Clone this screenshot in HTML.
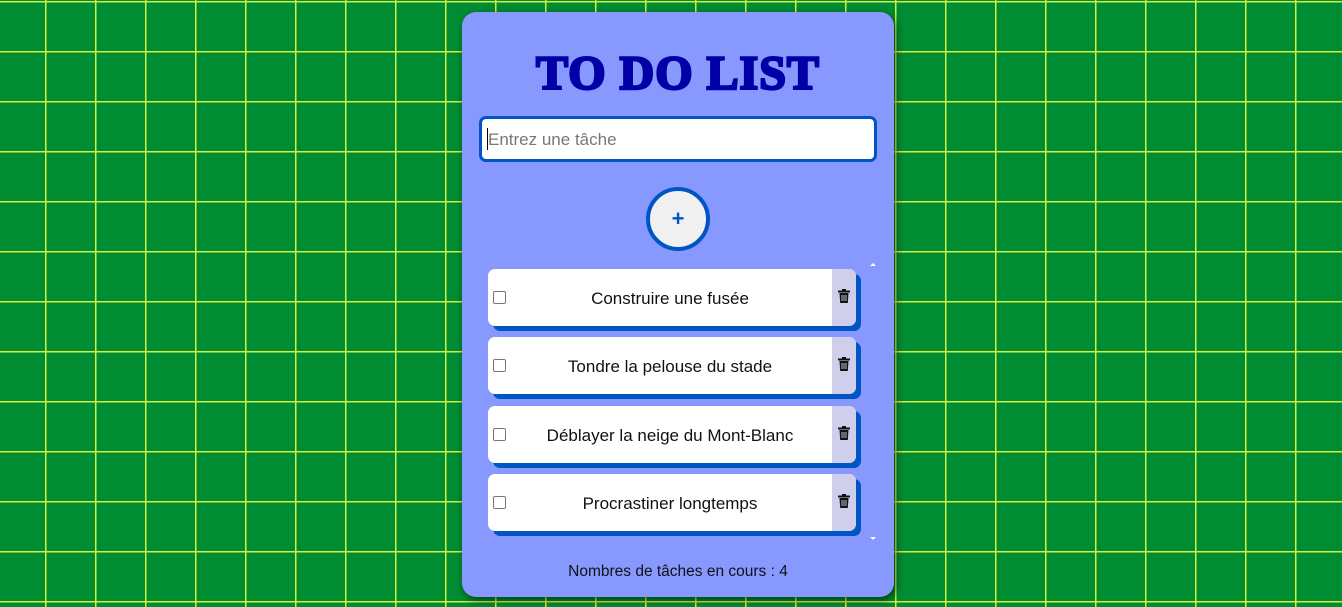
<!DOCTYPE html>
<html><head><meta charset="utf-8"><style>
html,body{margin:0;padding:0;width:1342px;height:607px;overflow:hidden}
body{background-color:#008c33;background-image:linear-gradient(90deg,#d6ee3c 0,#d6ee3c 1.6px,transparent 1.6px),linear-gradient(180deg,#d6ee3c 0,#d6ee3c 1.6px,transparent 1.6px);background-size:50px 50px;background-position:45px 0,0 1px;font-family:"Liberation Sans",sans-serif;position:relative}
.card{position:absolute;left:462px;top:12px;width:432px;height:585px;background:#8798ff;border-radius:14px;box-shadow:2px 3px 8px rgba(0,0,0,.55)}
h1{position:absolute;left:0;width:432px;top:38px;margin:0;text-align:center;font-family:"Liberation Serif",serif;font-weight:900;font-size:48px;color:#0000a6;letter-spacing:1px;-webkit-text-stroke:2.5px #0000a6;line-height:48px}
.inp{position:absolute;left:17px;top:104px;width:392px;height:40px;background:#fff;border:3px solid #0055c4;border-radius:7px}
.inp span{position:absolute;left:6px;top:11px;font-size:17px;color:#777}
.inp i{position:absolute;left:5px;top:9px;width:1px;height:22px;background:#000}
.btn{position:absolute;left:184px;top:175px;width:56px;height:56px;border:4px solid #0055c4;border-radius:50%;background:#f0f0f0;text-align:center;line-height:56px;font-size:22px;font-weight:bold;color:#0055c4}
.item{position:absolute;left:26px;width:368px;height:57px;background:#fff;border-radius:7px;box-shadow:5px 5px 0 #0055c4;overflow:hidden}
.item .cb{position:absolute;left:5px;top:22px;width:11px;height:11px;border:1px solid #777;border-radius:2px;background:#fff}
.item .t{position:absolute;left:20px;width:324px;top:1px;line-height:58px;text-align:center;font-size:17px;color:#111}
.item .d{position:absolute;right:0;top:0;width:24px;height:57px;background:#cfcfeb}
.item .d svg{position:absolute;left:6px;top:20px}
.foot{position:absolute;left:0;width:432px;top:551px;text-align:center;font-size:15.5px;color:#111}
.arr{position:absolute;left:408px;width:0;height:0;border-left:3px solid transparent;border-right:3px solid transparent}
</style></head><body>
<div class="card">
<h1>TO DO LIST</h1>
<div class="inp"><i></i><span>Entrez une tâche</span></div>
<div class="btn">+</div>
<div class="arr" style="top:251px;border-bottom:3px solid #fff"></div>
<div class="arr" style="top:525px;border-top:3px solid #fff"></div>
<div class="item" style="top:257px"><div class="cb"></div><div class="t">Construire une fusée</div><div class="d"><svg width="12" height="14" viewBox="0 0 12 14"><rect x="0" y="1.5" width="12" height="2" fill="#111"/><rect x="4" y="0" width="4" height="2" fill="#111"/><path d="M1.5 4h9l-.7 10h-7.6z" fill="#111"/><path d="M4 6v6M6 6v6M8 6v6" stroke="#cfcfeb" stroke-width="0.9"/></svg></div></div>
<div class="item" style="top:325px"><div class="cb"></div><div class="t">Tondre la pelouse du stade</div><div class="d"><svg width="12" height="14" viewBox="0 0 12 14"><rect x="0" y="1.5" width="12" height="2" fill="#111"/><rect x="4" y="0" width="4" height="2" fill="#111"/><path d="M1.5 4h9l-.7 10h-7.6z" fill="#111"/><path d="M4 6v6M6 6v6M8 6v6" stroke="#cfcfeb" stroke-width="0.9"/></svg></div></div>
<div class="item" style="top:394px"><div class="cb"></div><div class="t">Déblayer la neige du Mont-Blanc</div><div class="d"><svg width="12" height="14" viewBox="0 0 12 14"><rect x="0" y="1.5" width="12" height="2" fill="#111"/><rect x="4" y="0" width="4" height="2" fill="#111"/><path d="M1.5 4h9l-.7 10h-7.6z" fill="#111"/><path d="M4 6v6M6 6v6M8 6v6" stroke="#cfcfeb" stroke-width="0.9"/></svg></div></div>
<div class="item" style="top:462px"><div class="cb"></div><div class="t">Procrastiner longtemps</div><div class="d"><svg width="12" height="14" viewBox="0 0 12 14"><rect x="0" y="1.5" width="12" height="2" fill="#111"/><rect x="4" y="0" width="4" height="2" fill="#111"/><path d="M1.5 4h9l-.7 10h-7.6z" fill="#111"/><path d="M4 6v6M6 6v6M8 6v6" stroke="#cfcfeb" stroke-width="0.9"/></svg></div></div>
<div class="foot">Nombres de tâches en cours : 4</div>
</div>
</body></html>
